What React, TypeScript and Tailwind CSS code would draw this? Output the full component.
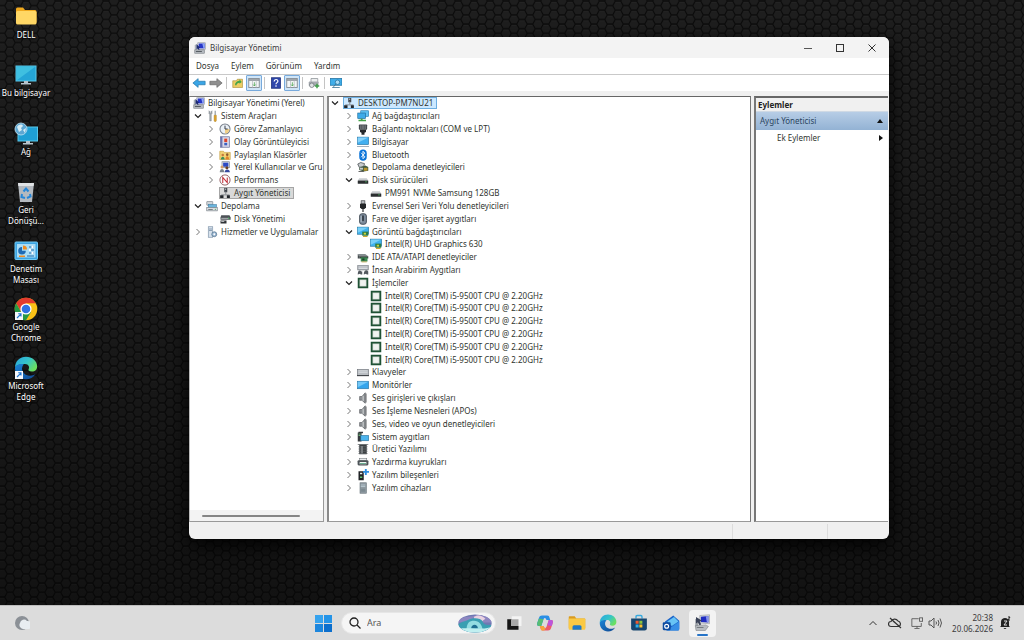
import React from 'react';

type IconName =
  | 'mmc' | 'tools' | 'clock' | 'book' | 'shared' | 'users' | 'perf' | 'device'
  | 'storage' | 'disk' | 'services' | 'network' | 'port' | 'computer' | 'bluetooth'
  | 'controller' | 'drive' | 'usb' | 'mouse' | 'gpu' | 'ide' | 'hid' | 'cpu'
  | 'keyboard' | 'monitor' | 'speaker' | 'system' | 'firmware' | 'printer'
  | 'component' | 'software';

const shapes: Record<IconName, React.ReactNode> = {
  mmc: (
    <>
      <path d="M1 4l3-1.500V11H1z" fill="#a9b0b8" />
      <rect x="5" y="1" width="10.500" height="9" fill="#dfe2e8" stroke="#8a8f9a" strokeWidth=".7" />
      <rect x="6.200" y="2" width="8" height="6.500" fill="#2636c8" />
      <path d="M11 2h3.200v6.500L12.500 8z" fill="#8fa6f5" />
      <path d="M3.500 3l5 4.500-2 .5 1 2.500-1.500.5-1-2.500-1.500 1z" fill="#1d2a74" />
      <rect x="1" y="10.500" width="13" height="4.500" fill="#b3b8be" stroke="#74797f" strokeWidth=".7" />
      <rect x="2.500" y="12" width="8" height="1.200" fill="#4d5359" />
    </>
  ),
  tools: (
    <>
      <path d="M4 1v4l1 1v8.500h2V6l1-1V1L7 2v2H5V2z" fill="#aab1b8" stroke="#6c747c" strokeWidth=".6" />
      <path d="M11.500 1h1.500v6h-1.500z" fill="#8c949b" />
      <path d="M10.800 7h3v7a1.500 1.500 0 0 1-3 0z" fill="#e0a52a" stroke="#9a6c12" strokeWidth=".5" />
    </>
  ),
  clock: (
    <>
      <circle cx="8" cy="8" r="6.700" fill="#eaf0f6" stroke="#777f8a" strokeWidth="1.400" />
      <path d="M8 8h6A6 6 0 0 1 8 14z" fill="#f0cf87" />
      <path d="M8 3.500V8h3.500" stroke="#333b46" strokeWidth="1.300" fill="none" />
    </>
  ),
  book: (
    <>
      <rect x="2" y="1" width="12" height="14" fill="#cdd2ea" stroke="#6a6f96" strokeWidth=".9" />
      <rect x="2" y="1" width="2.500" height="14" fill="#6d75b0" />
      <rect x="6" y="3" width="6" height="10" fill="#f0dfe0" />
      <rect x="7" y="3.500" width="4" height="4.500" fill="#d8432f" />
      <rect x="7" y="9" width="4" height="3.500" fill="#3961c4" />
    </>
  ),
  shared: (
    <>
      <path d="M1 3h5l1 1.500h8V14H1z" fill="#f3d374" stroke="#b98f2c" strokeWidth=".7" />
      <circle cx="5" cy="8" r="1.700" fill="#c77b3b" />
      <path d="M2.500 14c0-5 5-5 5 0z" fill="#3e8f55" />
      <circle cx="11" cy="7.500" r="1.700" fill="#8f5a2d" />
      <path d="M8.500 14c0-6 5-6 5 0z" fill="#e1842b" />
    </>
  ),
  users: (
    <>
      <rect x="4" y="1" width="10" height="8" fill="#dfe2e8" stroke="#6f7788" strokeWidth=".8" />
      <rect x="5.500" y="2.200" width="7" height="5.500" fill="#2c49c4" />
      <circle cx="4" cy="8" r="2" fill="#d59f6a" />
      <path d="M1 15c0-6 6-6 6 0z" fill="#7a828c" />
      <circle cx="10.500" cy="9" r="2" fill="#6b4327" />
      <path d="M7.500 15c0-5 7-5 7 0z" fill="#35489e" />
    </>
  ),
  perf: (
    <>
      <circle cx="8" cy="8" r="6.800" fill="#fff" stroke="#8c5558" strokeWidth="1.200" />
      <path d="M5 12V4.500l6 7V4.500" fill="none" stroke="#c2303a" strokeWidth="1.400" />
    </>
  ),
  device: (
    <>
      <rect x="7" y="1" width="4" height="6" fill="#3d4248" />
      <path d="M9 6v4M3 10.500h11" stroke="#81878c" strokeWidth="1.200" fill="none" />
      <rect x="1.500" y="11" width="4.500" height="3.800" fill="#22262b" />
      <rect x="10.500" y="11" width="4" height="3.800" fill="#22262b" />
      <rect x="8.500" y="2" width="1" height="2" fill="#e2e6ea" />
    </>
  ),
  storage: (
    <>
      <rect x="1" y="2" width="8" height="5" rx=".5" fill="#cfd5da" stroke="#737b82" strokeWidth=".8" />
      <rect x="3" y="6" width="11" height="4" fill="#6cb5dd" stroke="#39799f" strokeWidth=".7" />
      <rect x="1" y="10" width="14" height="4.500" fill="#d9dde1" stroke="#6f777e" strokeWidth=".8" />
      <rect x="3" y="12" width="6" height="1" fill="#5b6268" />
      <circle cx="12.500" cy="12.300" r=".8" fill="#36a84b" />
    </>
  ),
  disk: (
    <>
      <path d="M3 3h11l1.500 3v3H2V6z" fill="#4d5257" />
      <rect x="3" y="6.500" width="10" height="1.200" fill="#b6bbbf" />
      <rect x="2" y="10" width="8" height="4" fill="#2f3337" />
      <rect x="3" y="11" width="4" height="1" fill="#dfe3e6" />
      <circle cx="13" cy="7" r=".9" fill="#4ac164" />
    </>
  ),
  services: (
    <>
      <rect x="3" y="1" width="6" height="14" fill="#d6e1ec" stroke="#7389a0" strokeWidth=".8" />
      <path d="M4 4h4M4 6h4" stroke="#7389a0" />
      <circle cx="11" cy="11" r="3.300" fill="#9db9d4" stroke="#54748f" strokeWidth="1" />
      <circle cx="11" cy="11" r="1.200" fill="#fff" />
    </>
  ),
  network: (
    <>
      <rect x="5" y="1" width="10.500" height="7.500" fill="#5fc0f2" stroke="#2074a8" strokeWidth=".8" />
      <rect x="1" y="4" width="10.500" height="7.500" fill="#3daae8" stroke="#1b6796" strokeWidth=".8" />
      <rect x="5" y="11.500" width="2.500" height="2" fill="#45a349" />
      <path d="M2 14h10" stroke="#45a349" strokeWidth="1.800" />
    </>
  ),
  port: (
    <>
      <rect x="2.500" y="2" width="11" height="7" rx="1" fill="#44494e" />
      <path d="M5 3v5M7 3v5M9 3v5M11 3v5" stroke="#9aa0a5" strokeWidth=".8" />
      <path d="M4 9h8v3l-2 1v2.500H6V13l-2-1z" fill="#25282b" />
    </>
  ),
  computer: (
    <>
      <rect x=".5" y="1.500" width="15" height="10" fill="#42aff0" stroke="#23709f" strokeWidth=".8" />
      <path d="M1 2h14L1 9z" fill="#86d2fa" />
      <path d="M0 14h16" stroke="#8496a5" strokeWidth="1" />
    </>
  ),
  bluetooth: (
    <>
      <rect x="3" y=".5" width="10" height="15" rx="5" fill="#0b74d9" />
      <path d="M5.500 5l5 5.500L8 13V3l2.500 2.500-5 5.500" stroke="#fff" strokeWidth="1.200" fill="none" />
    </>
  ),
  controller: (
    <>
      <path d="M1 4l4-2 5 1.500-1 4-6 1z" fill="#c6cbce" stroke="#33383c" strokeWidth=".9" />
      <path d="M3 9l8-3 4 2v5l-6 1-6-2z" fill="#3f5a43" />
      <rect x="9" y="9" width="5" height="4" fill="#b9952d" />
      <rect x="4" y="9" width="4" height="2.500" fill="#c4cacd" />
      <path d="M2 14h7" stroke="#333" />
    </>
  ),
  drive: (
    <>
      <path d="M3 5.500h10l2 3H1z" fill="#c8cccf" />
      <rect x="1" y="8.500" width="14" height="4.500" rx=".5" fill="#2b2e30" />
      <rect x="11" y="10" width="2" height="1" fill="#56d86b" />
    </>
  ),
  usb: (
    <>
      <rect x="5.500" y="1" width="5" height="4" fill="#b8bcc0" stroke="#44484c" strokeWidth=".9" />
      <path d="M4 5h8v5l-2 2H6L4 10z" fill="#232628" />
      <path d="M8 12v4" stroke="#232628" strokeWidth="1.500" />
    </>
  ),
  mouse: (
    <>
      <rect x="3.500" y="1" width="9" height="14" rx="3" fill="#7e8d9d" stroke="#3c4651" strokeWidth="1.200" />
      <rect x="7" y="3" width="2" height="8" rx="1" fill="#252c34" />
      <path d="M5.500 4v8" stroke="#c7d0da" />
    </>
  ),
  gpu: (
    <>
      <rect x=".5" y="1.500" width="15" height="9.500" fill="#3fb2ee" stroke="#1f7099" strokeWidth=".8" />
      <path d="M1 2h14L1 9z" fill="#79d0f8" />
      <rect x="7" y="7.500" width="8" height="5.500" fill="#2e7a45" />
      <rect x="9" y="9" width="3" height="2.500" fill="#c5d23e" />
      <path d="M8 14h6" stroke="#d2a52e" strokeWidth="1.500" />
    </>
  ),
  ide: (
    <>
      <path d="M1 4h10l4 3H3z" fill="#858c8f" />
      <path d="M1 4l2 3v3H1z" fill="#444b4e" />
      <rect x="3" y="7" width="12" height="3" fill="#353c3d" />
      <rect x="5" y="8.500" width="9" height="5.500" fill="#3b8a51" />
      <rect x="7" y="10" width="3" height="2.500" fill="#1f3f2a" />
      <path d="M6 14.500h7" stroke="#b89a37" />
    </>
  ),
  hid: (
    <>
      <rect x="1" y="2" width="14" height="6" fill="#aab0b7" stroke="#6a7178" strokeWidth=".7" />
      <path d="M2 4h12M2 6h12" stroke="#e8ebed" />
      <path d="M1 14c0-7 3-6 5-4h1v4H5l-1-1zM9 14c0-6 4-7 6-4v4h-2l-1-1z" fill="#53595f" />
    </>
  ),
  cpu: (
    <>
      <rect x="1" y="1" width="14" height="14" fill="#1f5235" />
      <rect x="3.700" y="3.700" width="8.600" height="8.600" fill="#f0f3f0" stroke="#8ca394" strokeWidth=".8" />
    </>
  ),
  keyboard: (
    <>
      <rect x=".5" y="4.500" width="15" height="8" fill="#b9bdc2" stroke="#6a6f75" strokeWidth=".8" />
      <path d="M2 6.500h12M2 8.500h12" stroke="#dfe2e5" strokeWidth=".9" />
      <path d="M0 12.800h16" stroke="#3f4347" strokeWidth="1.500" />
    </>
  ),
  monitor: (
    <>
      <rect x=".5" y="3" width="15" height="10" fill="#35a5ec" stroke="#28729d" strokeWidth=".8" />
      <path d="M1 3.500h14L1 11z" fill="#73c8f7" />
    </>
  ),
  speaker: (
    <>
      <path d="M3.500 6h3l4.500-5v14l-4.500-4h-3z" fill="#8e9296" stroke="#4f5356" strokeWidth=".8" />
      <path d="M8.200 5v7" stroke="#dadcde" strokeWidth="1.200" />
      <path d="M12 2v12" stroke="#5a5d60" strokeWidth="1.300" />
    </>
  ),
  system: (
    <>
      <rect x="1" y="2" width="5" height="12" fill="#35393d" />
      <path d="M2 4h3M2 6h3" stroke="#7ed987" />
      <path d="M2 2h6" stroke="#35393d" strokeWidth="2" />
      <rect x="5" y="6" width="10.500" height="7" fill="#4cb4ee" stroke="#246d98" strokeWidth=".8" />
    </>
  ),
  firmware: (
    <>
      <rect x="3" y="2" width="10" height="13" fill="#3c4043" />
      <path d="M1 2h14M2 5h12M2 8h12M2 11h12M2 14h12" stroke="#5e6366" strokeWidth="1" />
      <rect x="5" y="4" width="3" height="10" fill="#787d80" />
    </>
  ),
  printer: (
    <>
      <rect x="3" y="3" width="10" height="3" fill="#e9ecee" stroke="#697074" strokeWidth=".7" />
      <rect x=".8" y="5.500" width="14.400" height="7" rx="1.500" fill="#4c5357" />
      <rect x="3.500" y="8" width="9" height="3" fill="#eef7f3" />
      <path d="M4 10h8" stroke="#3f9570" />
    </>
  ),
  component: (
    <>
      <rect x="2" y="3" width="7" height="12" fill="#202326" />
      <rect x="4" y="5" width="3" height="2" fill="#e7eaec" />
      <rect x="4" y="10" width="3" height="2" fill="#63c572" />
      <path d="M10.500 0h2.500v2.500h3V5h-3v3h-2.500V5H8V2.500h2.500z" fill="#2f8fe0" />
    </>
  ),
  software: (
    <>
      <rect x="4" y="1" width="8.500" height="14" fill="#8e9aa1" stroke="#68737a" strokeWidth=".8" />
      <path d="M5 4h6M5 6h6" stroke="#bfd0da" />
      <rect x="5.500" y="9" width="5.500" height="4" fill="#7b8990" />
    </>
  ),
};

function Icon({ name }: { name: IconName }) {
  return (
    <svg viewBox="0 0 16 16" className="size-3 shrink-0" aria-hidden="true">
      {shapes[name]}
    </svg>
  );
}

interface Node {
  level: 0 | 1 | 2;
  label: string;
  icon: IconName;
  state?: 'open' | 'closed';
  selected?: boolean;
}

const scopeTree: Node[] = [
  { level: 0, label: 'Bilgisayar Yönetimi (Yerel)', icon: 'mmc' },
  { level: 1, label: 'Sistem Araçları', icon: 'tools', state: 'open' },
  { level: 2, label: 'Görev Zamanlayıcı', icon: 'clock', state: 'closed' },
  { level: 2, label: 'Olay Görüntüleyicisi', icon: 'book', state: 'closed' },
  { level: 2, label: 'Paylaşılan Klasörler', icon: 'shared', state: 'closed' },
  { level: 2, label: 'Yerel Kullanıcılar ve Gru', icon: 'users', state: 'closed' },
  { level: 2, label: 'Performans', icon: 'perf', state: 'closed' },
  { level: 2, label: 'Aygıt Yöneticisi', icon: 'device', selected: true },
  { level: 1, label: 'Depolama', icon: 'storage', state: 'open' },
  { level: 2, label: 'Disk Yönetimi', icon: 'disk' },
  { level: 1, label: 'Hizmetler ve Uygulamalar', icon: 'services', state: 'closed' },
];

const processor: Node = { level: 2, label: 'Intel(R) Core(TM) i5-9500T CPU @ 2.20GHz', icon: 'cpu' };

const deviceTree: Node[] = [
  { level: 0, label: 'DESKTOP-PM7NU21', icon: 'device', state: 'open', selected: true },
  { level: 1, label: 'Ağ bağdaştırıcıları', icon: 'network', state: 'closed' },
  { level: 1, label: 'Bağlantı noktaları (COM ve LPT)', icon: 'port', state: 'closed' },
  { level: 1, label: 'Bilgisayar', icon: 'computer', state: 'closed' },
  { level: 1, label: 'Bluetooth', icon: 'bluetooth', state: 'closed' },
  { level: 1, label: 'Depolama denetleyicileri', icon: 'controller', state: 'closed' },
  { level: 1, label: 'Disk sürücüleri', icon: 'drive', state: 'open' },
  { level: 2, label: 'PM991 NVMe Samsung 128GB', icon: 'drive' },
  { level: 1, label: 'Evrensel Seri Veri Yolu denetleyicileri', icon: 'usb', state: 'closed' },
  { level: 1, label: 'Fare ve diğer işaret aygıtları', icon: 'mouse', state: 'closed' },
  { level: 1, label: 'Görüntü bağdaştırıcıları', icon: 'gpu', state: 'open' },
  { level: 2, label: 'Intel(R) UHD Graphics 630', icon: 'gpu' },
  { level: 1, label: 'IDE ATA/ATAPI denetleyiciler', icon: 'ide', state: 'closed' },
  { level: 1, label: 'İnsan Arabirim Aygıtları', icon: 'hid', state: 'closed' },
  { level: 1, label: 'İşlemciler', icon: 'cpu', state: 'open' },
  processor, processor, processor, processor, processor, processor,
  { level: 1, label: 'Klavyeler', icon: 'keyboard', state: 'closed' },
  { level: 1, label: 'Monitörler', icon: 'monitor', state: 'closed' },
  { level: 1, label: 'Ses girişleri ve çıkışları', icon: 'speaker', state: 'closed' },
  { level: 1, label: 'Ses İşleme Nesneleri (APOs)', icon: 'speaker', state: 'closed' },
  { level: 1, label: 'Ses, video ve oyun denetleyicileri', icon: 'speaker', state: 'closed' },
  { level: 1, label: 'Sistem aygıtları', icon: 'system', state: 'closed' },
  { level: 1, label: 'Üretici Yazılımı', icon: 'firmware', state: 'closed' },
  { level: 1, label: 'Yazdırma kuyrukları', icon: 'printer', state: 'closed' },
  { level: 1, label: 'Yazılım bileşenleri', icon: 'component', state: 'closed' },
  { level: 1, label: 'Yazılım cihazları', icon: 'software', state: 'closed' },
];

function Toggle({ state }: { state?: 'open' | 'closed' }) {
  if (!state) return <span className="w-3 shrink-0" />;
  const open = state === 'open';
  return (
    <button className="w-3 shrink-0" aria-label={open ? 'Daralt' : 'Genişlet'}>
      <svg viewBox="0 0 8 8" className="size-2" fill="none" aria-hidden="true">
        {open ? (
          <path d="M1 2.500l3 3 3-3" stroke="#222" strokeWidth="1.200" />
        ) : (
          <path d="M2.500 1l3 3-3 3" stroke="#777" strokeWidth="1" />
        )}
      </svg>
    </button>
  );
}

function Tree({ nodes, indent, rootToggle, selectedClass, className, label }: {
  nodes: Node[];
  indent: [string, string, string];
  rootToggle: boolean;
  selectedClass: string;
  className: string;
  label: string;
}) {
  return (
    <ul role="tree" aria-label={label} className={`flex flex-col ${className}`}>
      {nodes.map((n, i) => (
        <li key={i} role="treeitem" aria-selected={!!n.selected} className={`flex min-h-0 flex-1 items-center ${indent[n.level]}`}>
          {(n.level > 0 || rootToggle) && <Toggle state={n.state} />}
          <span
            className={`flex items-center gap-[3px] whitespace-nowrap leading-3 ${n.selected ? selectedClass : ''}`}
          >
            <Icon name={n.icon} />
            {n.label}
          </span>
        </li>
      ))}
    </ul>
  );
}

const Shortcut = () => (
  <>
    <rect x="1" y="15" width="8" height="8" fill="#f6f9fc" />
    <path d="M3 21l4-4M4.200 16.800H7v2.800" stroke="#2377d1" strokeWidth="1.100" fill="none" />
  </>
);

const EdgeShape = () => (
  <>
    <defs>
      <linearGradient id="edgeTop" x1="0" y1="0" x2="1" y2=".6">
        <stop offset="0" stopColor="#2aa5e0" />
        <stop offset=".55" stopColor="#35c4c9" />
        <stop offset="1" stopColor="#6be05f" />
      </linearGradient>
      <linearGradient id="edgeLow" x1="0" y1="0" x2="1" y2="1">
        <stop offset="0" stopColor="#1a86d8" />
        <stop offset="1" stopColor="#11478f" />
      </linearGradient>
    </defs>
    <path d="M1 12C1 5 6 .8 12 .8S23.200 5 23.200 10.500c0 3-2.200 5-5.200 5-3.200 0-4.200-1.200-3.300-2.500 1-1.500.2-5-3.700-5C6 8 2 9 1 12z" fill="url(#edgeTop)" />
    <path d="M1 12C1.500 9 6 7 10 8.500 7 10 7 18 14 19.500c3 .6 5.500-.3 7.500-1.500-2 3.500-5.500 5.200-9.500 5.200C5.500 23.200 1 18 1 12z" fill="url(#edgeLow)" />
  </>
);

const desktopItems: { label: string; art: React.ReactNode }[] = [
  {
    label: 'DELL',
    art: (
      <>
        <path d="M2 4a1.500 1.500 0 0 1 1.500-1.500H9L11 5h10a1.500 1.500 0 0 1 1.500 1.500v11H2z" fill="#f0a91e" />
        <rect x="2" y="6" width="20.500" height="13.500" rx="1.500" fill="#ffd765" />
      </>
    ),
  },
  {
    label: 'Bu bilgisayar',
    art: (
      <>
        <rect x="2" y="3" width="20" height="15" fill="#25a5d6" stroke="#58c6e8" />
        <path d="M2.500 3.500h19L2.500 17.500z" fill="#3fbfe0" />
        <path d="M10 18h4v2h3v1.500H7V20h3z" fill="#b8c4cc" />
      </>
    ),
  },
  {
    label: 'Ağ',
    art: (
      <>
        <rect x="4" y="5" width="19.500" height="14" fill="#1f9fd4" stroke="#56c5e8" />
        <path d="M12 19h4v2h3v1.500H9V21h3z" fill="#b8c4cc" />
        <circle cx="7" cy="7" r="6" fill="#5da7d3" stroke="#bfe2f3" strokeWidth=".8" />
        <path d="M3 5c2-3 5-3 6-1l-2 2 1 2-3 2zM9 8l3-2-1 5z" fill="#d7edf5" />
      </>
    ),
  },
  {
    label: 'Geri\nDönüşü...',
    art: (
      <>
        <path d="M4 3h16l-2 19H6z" fill="#b4b9bf" />
        <path d="M4 3h16l-.4 3H4.400z" fill="#dfe2e5" />
        <path d="M9.500 11.500l2.500-3 2.500 3M16 14l.5 2.500-3.500 1.500M11 18l-3.500-1 .5-3" fill="none" stroke="#2586d8" strokeWidth="2" />
      </>
    ),
  },
  {
    label: 'Denetim\nMasası',
    art: (
      <>
        <rect x="1" y="3" width="22.500" height="17.500" rx="1" fill="#3da4e2" stroke="#71cbf5" />
        <rect x="3" y="5" width="18.500" height="13.500" fill="#a9ddf6" />
        <path d="M8 8a3.800 3.800 0 1 0 3.800 3.800H8z" fill="#1f6bb5" />
        <path d="M9 6.500a4 4 0 0 1 4 4H9z" fill="#f08b1e" />
        <path d="M5 17.300h6" stroke="#f08b1e" strokeWidth="1.500" />
        <path d="M15 8h5M15 11h5M15 14h5M13 17h7" stroke="#206cad" strokeWidth="1.200" />
        <circle cx="18.500" cy="8" r="1.200" fill="#fff" />
        <circle cx="16" cy="11" r="1.200" fill="#fff" />
        <circle cx="18.500" cy="14" r="1.200" fill="#fff" />
      </>
    ),
  },
  {
    label: 'Google\nChrome',
    art: (
      <>
        <circle cx="12" cy="12" r="11.300" fill="#fbc116" />
        <path d="M12 6.300h9.800A11.300 11.300 0 0 0 2.200 6.300L7 14.500z" fill="#e33b2e" />
        <path d="M2.200 6.300A11.300 11.300 0 0 0 12 23.300l5-8.400-9.900 0z" fill="#279847" />
        <circle cx="12" cy="12" r="5.600" fill="#fff" />
        <circle cx="12" cy="12" r="4.300" fill="#2f72e4" />
        <Shortcut />
      </>
    ),
  },
  { label: 'Microsoft\nEdge', art: <><EdgeShape /><Shortcut /></> },
];

const taskbarApps: { name: string; active?: boolean; art: React.ReactNode }[] = [
  {
    name: 'Görev Görünümü',
    art: (
      <>
        <rect x="9" y="3" width="13" height="13" fill="#f4f4f4" />
        <path d="M3 7h6v9h9v5H3z" fill="#161616" />
        <rect x="8" y="7" width="10" height="9" fill="#a9a9a9" />
      </>
    ),
  },
  {
    name: 'Copilot',
    art: (
      <>
        <path d="M8 2h7c2 0 2.500 1 3 3l1 3h-5l-1-2c-1-1-2-1-3 1L7 16H4c-3 0-3-2-2-5l2-6c.7-2 2-3 4-3z" fill="#2a8fe6" />
        <path d="M2 11l2-5 6 1-3 9H4c-2.500 0-3-2-2-5z" fill="#57bd73" />
        <path d="M16 22H9c-2 0-2.500-1-3-3l-1-3h5l1 2c1 1 2 1 3-1l3-9h3c3 0 3 2 2 5l-2 6c-.7 2-2 3-4 3z" fill="#ed5a6a" />
        <path d="M17 8h3c3 0 3 2 2 5l-1 3-6-1z" fill="#bb55db" />
        <path d="M6 18.500L5 16h5l1 2c1 1 1.500 1 2.500 0L11 22H9c-2 0-2.500-1.500-3-3.500z" fill="#f5a63d" />
      </>
    ),
  },
  {
    name: 'Dosya Gezgini',
    art: (
      <>
        <path d="M1 4a1 1 0 0 1 1-1h7l2 3h11a1 1 0 0 1 1 1v12H1z" fill="#d99b20" />
        <rect x="1" y="6" width="22" height="15" rx="1" fill="#fac944" />
        <path d="M6 21v-4a2 2 0 0 1 2-2h8a2 2 0 0 1 2 2v4z" fill="#1e78c7" />
      </>
    ),
  },
  { name: 'Microsoft Edge', art: <EdgeShape /> },
  {
    name: 'Microsoft Store',
    art: (
      <>
        <path d="M8 6V3.500C8 2.500 8.500 2 9.500 2h5c1 0 1.500.5 1.500 1.500V6" fill="none" stroke="#36a9df" strokeWidth="1.800" />
        <path d="M1.500 6h21v13a3 3 0 0 1-3 3h-15a3 3 0 0 1-3-3z" fill="#17466f" />
        <path d="M7.500 9h4v4h-4z" fill="#f05b30" />
        <path d="M12.500 9h4v4h-4z" fill="#8bc53f" />
        <path d="M7.500 14h4v4h-4z" fill="#2cb1ea" />
        <path d="M12.500 14h4v4h-4z" fill="#fbc22d" />
      </>
    ),
  },
  {
    name: 'Outlook',
    art: (
      <>
        <path d="M4 10L15 2l8 7v11a2 2 0 0 1-2 2H6z" fill="#1a64c9" />
        <path d="M7 10l9-6 6 6-9 6z" fill="#68c4f5" />
        <path d="M6 22l17-12v10a2 2 0 0 1-2 2z" fill="#388fe6" />
        <rect x="1" y="11" width="10.500" height="10.500" rx="1.500" fill="#0d4b9f" />
        <circle cx="6.200" cy="16.300" r="2.600" fill="none" stroke="#fff" strokeWidth="1.600" />
      </>
    ),
  },
  {
    name: 'Bilgisayar Yönetimi',
    active: true,
    art: (
      <>
        <path d="M3 7l4-2v12H3z" fill="#9da2a8" />
        <path d="M9 2l13-1v12L9 12z" fill="#d5d8dc" stroke="#8b9096" strokeWidth=".7" />
        <path d="M10.500 3.500l10-1v8.700l-10-.4z" fill="#1f2cc0" />
        <path d="M17 2.900l3.500-.4v8.700l-2-.1z" fill="#8794ec" />
        <path d="M4 4l8 5-3 1 2 4-2.500 1-2-4-2.500 1.500z" fill="#3a4258" />
        <path d="M3 15.500l14-1 3.500 2-4 5.500H4z" fill="#b7bbc0" stroke="#777c82" strokeWidth=".7" />
        <path d="M5 18h9" stroke="#62676c" />
      </>
    ),
  },
];

function Wallpaper() {
  return (
    <svg className="absolute inset-0 size-full" aria-hidden="true">
      <defs>
        <pattern id="hex" width="16" height="9.240" patternUnits="userSpaceOnUse" patternTransform="translate(2 1)">
          <rect width="16" height="9.240" fill="#1e1e1e" />
          <path
            d="M0 5.600h2.200M13.800 5.600H16M5.300 1h5.400"
            stroke="#292929"
            strokeWidth=".8"
          />
          <path
            d="M0 4.620h2.670L5.330 0h5.340l2.660 4.620H16M2.670 4.620L5.330 9.240h5.340l2.660-4.620"
            fill="none"
            stroke="#0b0b0b"
            strokeWidth="1.200"
          />
        </pattern>
        <linearGradient id="dim" x1="0" y1="0" x2="0" y2="1">
          <stop offset="0" stopColor="#000" stopOpacity="0" />
          <stop offset=".5" stopColor="#000" stopOpacity=".15" />
          <stop offset="1" stopColor="#000" stopOpacity=".4" />
        </linearGradient>
      </defs>
      <rect width="100%" height="100%" fill="url(#hex)" />
      <rect width="100%" height="100%" fill="url(#dim)" />
    </svg>
  );
}

function Toolbar() {
  const divider = <span className="mx-0.5 h-3 w-px bg-[#c4c4c4]" />;
  const base = 'flex h-4 w-[17px] items-center justify-center';
  const pressed = 'flex size-4 items-center justify-center rounded-[1px] border border-[#78aadc] bg-[#cfe5f8]';
  const pane = (
    <svg viewBox="0 0 16 16" className="size-3 shrink-0" aria-hidden="true">
      <rect x="1" y="2" width="14" height="12" fill="#f3f5f6" stroke="#848b92" strokeWidth="1.200" />
      <path d="M1 4h14" stroke="#848b92" strokeWidth="2" />
      <path d="M6 5v9M11 5v9" stroke="#b9bec3" />
      <path d="M8.500 7v5M6.800 10l1.700 2 1.700-2" stroke="#4aa54e" fill="none" />
    </svg>
  );
  return (
    <div role="toolbar" aria-label="Araçlar" className="flex h-4 shrink-0 items-center bg-white pl-px">
      <button className={base} aria-label="Geri">
        <svg viewBox="0 0 16 16" className="size-3.5"><path d="M1 8l6-5v3h8v4H7v3z" fill="#3aa5e6" stroke="#2377ab" strokeWidth=".8" /></svg>
      </button>
      <button className={base} aria-label="İleri">
        <svg viewBox="0 0 16 16" className="size-3.5"><path d="M15 8L9 3v3H1v4h8v3z" fill="#8f8f8f" stroke="#696969" strokeWidth=".8" /></svg>
      </button>
      {divider}
      <button className={base} aria-label="Yukarı">
        <svg viewBox="0 0 16 16" className="size-3">
          <path d="M1 5h5l1-2h7v11H1z" fill="#eccc62" stroke="#a98b34" strokeWidth=".8" />
          <path d="M4 11c0-4 3-6 6-6V3l3 3.500L10 9V7.500C8 7.500 6 9 6 11z" fill="#45a447" />
        </svg>
      </button>
      <button className={pressed} aria-label="Konsol ağacı">{pane}</button>
      {divider}
      <button className={base} aria-label="Yardım">
        <svg viewBox="0 0 16 16" className="size-3">
          <rect x="2" y="1" width="12" height="14" fill="#2f47ab" stroke="#182a76" />
          <path d="M5.500 6c0-3.500 5-3.500 5-.5 0 2-2.500 2-2.500 4M8 11v2" stroke="#fff" strokeWidth="1.600" fill="none" />
        </svg>
      </button>
      <button className={pressed} aria-label="Eylem bölmesi">{pane}</button>
      {divider}
      <button className={base} aria-label="Değişiklikleri tara">
        <svg viewBox="0 0 16 16" className="size-3">
          <path d="M4 2h9v6H4z" fill="#eceeef" stroke="#8b9196" />
          <rect x="1" y="6" width="13" height="6" rx="1" fill="#a4a9ae" />
          <circle cx="5" cy="11" r="3" fill="#dfe2e4" stroke="#6e7479" />
          <path d="M9 12h6M12 9v6" stroke="#3f9d49" strokeWidth="2" />
        </svg>
      </button>
      {divider}
      <button className={base} aria-label="Uzak bilgisayar">
        <svg viewBox="0 0 16 16" className="size-3">
          <rect x="0" y="2" width="16" height="9" fill="#3fade9" stroke="#1f6e9c" />
          <circle cx="10" cy="7" r="3" fill="#a9dbf5" stroke="#286d97" />
          <path d="M8 9l-4 5M3 14h10" stroke="#336c8e" />
        </svg>
      </button>
    </div>
  );
}

function ManagementWindow() {
  return (
    <main className="absolute inset-x-0 top-[37px] bottom-[66px] mr-[135px] ml-[189px] flex flex-col overflow-hidden rounded-md bg-[#f0f0f0] text-[8px] text-[#30352f] shadow-[0_6px_20px_#000]">
      <header className="flex h-[21px] shrink-0 items-center bg-[#f3f3f3] pr-px pl-[5px]">
        <Icon name="mmc" />
        <h1 className="flex-1 pl-1 text-[#3a3a3a]">Bilgisayar Yönetimi</h1>
        <button className="flex h-full w-8 items-center justify-center" aria-label="Simge durumuna küçült">
          <svg viewBox="0 0 8 8" className="size-2" fill="none" stroke="#555"><path d="M0 4.500h8" /></svg>
        </button>
        <button className="flex h-full w-8 items-center justify-center" aria-label="Ekranı kapla">
          <svg viewBox="0 0 8 8" className="size-2" fill="none" stroke="#333"><rect x=".5" y=".5" width="7" height="7" /></svg>
        </button>
        <button className="flex h-full w-8 items-center justify-center" aria-label="Kapat">
          <svg viewBox="0 0 8 8" className="size-2" fill="none" stroke="#333"><path d="M.5.5l7 7M7.500.5l-7 7" /></svg>
        </button>
      </header>
      <nav className="flex h-[17px] shrink-0 items-center gap-3 border-b border-[#c9c9c9] bg-white pl-[7px]">
        {['Dosya', 'Eylem', 'Görünüm', 'Yardım'].map((m) => (
          <button key={m}>{m}</button>
        ))}
      </nav>
      <Toolbar />
      <div className="flex min-h-0 flex-1 gap-[3px] pt-[5px] pr-px">
        <section className="flex w-[135px] shrink-0 flex-col border border-t-[#777] border-r-[#999] border-b-[#999] border-l-[#bbb] bg-white">
          <Tree
            nodes={scopeTree}
            label="Konsol ağacı"
            className="h-[141px]"
            indent={['pl-[3px]', 'pl-1', 'pl-[17px]']}
            rootToggle={false}
            selectedClass="bg-[#d9d9d9] pr-1 outline outline-[#a5a5a5] -outline-offset-1"
          />
          <div className="mt-auto flex h-[11px] items-center bg-[#f3f3f3] pl-3">
            <span className="h-0.5 w-[98px] rounded-full bg-[#868686]" />
          </div>
        </section>
        <section className="min-w-0 flex-1 border border-t-[#666] border-r-[#777] border-b-[#999] border-l-2 border-l-[#8a8a8a] bg-white">
          <Tree
            nodes={deviceTree}
            label="Aygıtlar"
            className="h-[397px]"
            indent={['pl-0.5', 'pl-4', 'pl-[29px]']}
            rootToggle
            selectedClass="bg-[#cce8ff] pr-1 outline outline-[#6caee0] -outline-offset-1"
          />
        </section>
        <aside className="w-[134px] shrink-0 border border-t-2 border-r-0 border-t-[#666] border-b-[#999] border-l-2 border-l-[#777] bg-white">
          <h2 className="flex h-[13px] items-center bg-[#f0f0f0] pl-0.5 font-bold text-[#222]">Eylemler</h2>
          <button className="flex h-[19px] w-full items-center justify-between border-t border-[#cfd9e4] bg-linear-to-b from-[#b7cde6] to-[#93b2d4] pr-[5px] pl-1 text-[#2b4560]">
            Aygıt Yöneticisi
            <svg viewBox="0 0 6 4" className="h-1 w-1.5"><path d="M0 4l3-4 3 4z" fill="#111" /></svg>
          </button>
          <button className="flex h-4 w-full items-center justify-between pr-[5px] pl-[21px]">
            Ek Eylemler
            <svg viewBox="0 0 4 6" className="h-1.5 w-1"><path d="M0 0l4 3-4 3z" fill="#111" /></svg>
          </button>
        </aside>
      </div>
      <footer className="flex h-[17px] shrink-0 justify-end pt-0.5">
        <span className="w-[95px] border-l border-[#dcdcdc]" />
        <span className="w-[62px] border-l border-[#dcdcdc]" />
      </footer>
    </main>
  );
}

function Taskbar() {
  return (
    <footer className="relative grid h-[35px] shrink-0 grid-cols-[1fr_auto_1fr] items-center border-t border-[#bdbdbd] bg-[#dcdcdc] pl-0.5 text-[#3b3b3b]">
      <button className="w-fit pl-3" aria-label="Pencere öğeleri">
        <svg viewBox="0 0 16 16" className="size-4">
          <circle cx="8" cy="8" r="7" fill="#8b9096" />
          <path d="M6 8a4 4 0 0 1 7-2 4 4 0 0 1 1 8H9a4 4 0 0 1-3-6z" fill="#e9edf1" />
        </svg>
      </button>
      <div className="flex items-center">
        <button className="flex w-[31px] justify-center" aria-label="Başlat">
          <svg viewBox="0 0 17 17" className="size-[17px]">
            <path d="M0 0h8v8H0z" fill="#36a3ee" />
            <path d="M9 0h8v8H9z" fill="#2494e8" />
            <path d="M0 9h8v8H0z" fill="#1c86dd" />
            <path d="M9 9h8v8H9z" fill="#0c6fcd" />
          </svg>
        </button>
        <label className="ml-0.5 flex h-[22px] w-[155px] items-center gap-1.5 overflow-hidden rounded-full border border-[#e6e6e6] bg-[#f5f5f5] pr-0.5 pl-[7px]">
          <svg viewBox="0 0 12 12" className="size-3 shrink-0" fill="none" stroke="#222" strokeWidth="1.300">
            <circle cx="5" cy="5" r="4" />
            <path d="M8 8l3.500 3.500" />
          </svg>
          <input aria-label="Ara" placeholder="Ara" className="w-full min-w-0 bg-transparent text-[9px] outline-none placeholder:text-[#555]" />
          <svg viewBox="0 0 36 20" className="h-[19px] w-9 shrink-0">
            <defs><clipPath id="oval"><ellipse cx="18" cy="10" rx="17.500" ry="9.500" /></clipPath></defs>
            <g clipPath="url(#oval)">
              <rect width="36" height="20" fill="#6f79b3" />
              <path d="M0 6c8-5 14-2 20-5s12 0 16 3v5H0z" fill="#8d86c0" />
              <path d="M17 3c5-3 9-1 12 2l-4 3-8-1z" fill="#ead2e2" />
              <path d="M0 11c5-4 8-3 11-5s13-3 15 2 6 3 10 4v8H0z" fill="#3a9fb2" />
              <path d="M9 18c0-9 3-11 8-11s9 4 9 11z" fill="#93dde2" />
              <path d="M14 15c0-5 7-5 7 0z" fill="#1f6f92" />
              <path d="M2 15.500c8-2 20 2 32-1.500v6H2z" fill="#c0eff0" />
            </g>
          </svg>
        </label>
        <div className="ml-0.5 flex w-[220px]">
          {taskbarApps.map((a) => (
            <div key={a.name} className="flex flex-1 justify-center">
              <button
                aria-label={a.name}
                className={`relative flex h-[27px] w-[27px] items-center justify-center rounded ${a.active ? 'bg-[#f3f3f3]' : ''}`}
              >
                <svg viewBox="0 0 24 24" className="size-[18px]" aria-hidden="true">{a.art}</svg>
                {a.active && <span className="absolute bottom-px h-0.5 w-[11px] rounded-full bg-[#2674c8]" />}
              </button>
            </div>
          ))}
        </div>
      </div>
      <div className="flex items-center justify-end pr-[13px]">
        <button className="mr-[11px]" aria-label="Gizli simgeler">
          <svg viewBox="0 0 8 8" className="size-2" fill="none" stroke="#333"><path d="M.5 6L4 2.500 7.500 6" /></svg>
        </button>
        <button className="mr-[9px]" aria-label="OneDrive">
          <svg viewBox="0 0 14 12" className="h-3 w-3.5" fill="none" stroke="#333" strokeWidth="1.200">
            <path d="M3 9.500a2.500 2.500 0 0 1 0-5 4 4 0 0 1 7-.5 3 3 0 0 1 1 5.500zM2 1l11 10M5 4l6 5" />
          </svg>
        </button>
        <button className="mr-[5px]" aria-label="Ağ">
          <svg viewBox="0 0 14 14" className="size-3" fill="none" stroke="#555">
            <path d="M9 2H1v9h11V7M4 13.500h6M7 11v2" />
            <rect x="10" y="1" width="3.500" height="4" />
          </svg>
        </button>
        <button className="mr-2.5" aria-label="Ses">
          <svg viewBox="0 0 14 12" className="h-3 w-3.5" fill="none" stroke="#555">
            <path d="M1 4h2l3-3v10L3 8H1zM8 4.500q1 1.500 0 3M10 3q2 3 0 6M12 1.500q3 4.500 0 9" />
          </svg>
        </button>
        <button className="text-right text-[8px] leading-[11px]">
          20:38
          <br />
          20.06.2026
        </button>
        <button className="ml-1.5" aria-label="Bildirimler">
          <svg viewBox="0 0 12 14" className="h-3.5 w-3">
            <path d="M2 10V6c0-3 2-4 4-4s4 1.500 4 4v4l1 1H1zM4.500 12h3q-1.500 2-3 0" fill="#222" />
            <path d="M5 5h3L5 9h3" stroke="#ddd" fill="none" />
            <path d="M9 1h2L9 4h2" stroke="#222" fill="none" />
          </svg>
        </button>
      </div>
    </footer>
  );
}

export default function App() {
  return (
    <div className="flex h-screen flex-col overflow-hidden bg-[#111] font-['Noto_Sans','Open_Sans',sans-serif]">
      <div className="relative min-h-0 flex-1">
        <Wallpaper />
        <ul className="relative flex h-[409px] w-[52px] flex-col">
          {desktopItems.map((d) => (
            <li key={d.label} className="min-h-0 flex-1 pt-[5px]">
              <button className="flex w-full flex-col items-center text-center text-[8px] leading-[11px] text-white [text-shadow:0_1px_2px_#000]">
                <svg viewBox="0 0 24 24" className="size-6" aria-hidden="true">{d.art}</svg>
                <span className="whitespace-pre">{d.label}</span>
              </button>
            </li>
          ))}
        </ul>
        <ManagementWindow />
      </div>
      <Taskbar />
    </div>
  );
}
